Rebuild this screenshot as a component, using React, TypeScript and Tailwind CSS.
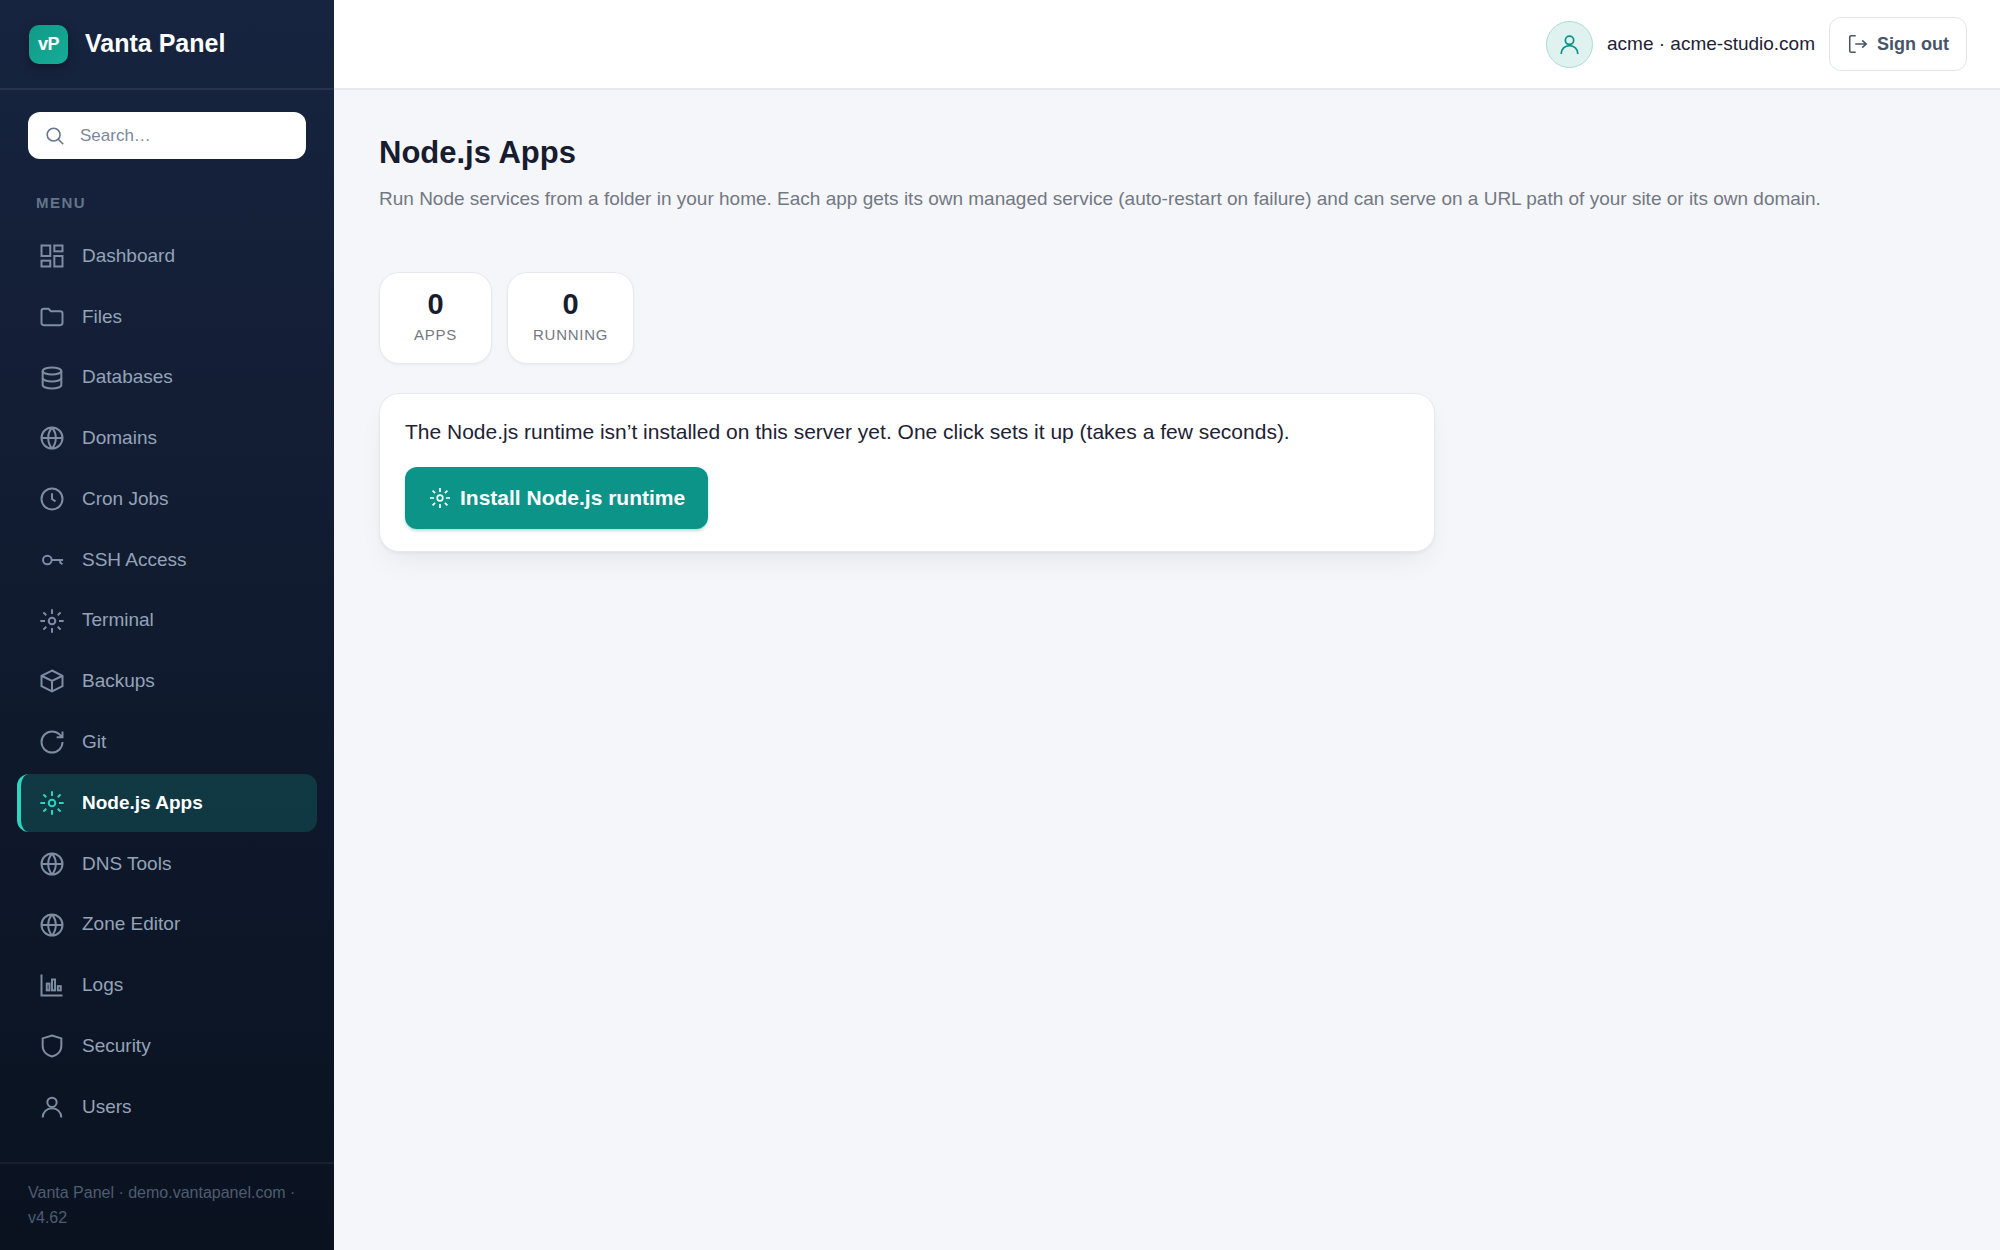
import React from 'react';

type IconName =
  | 'dashboard'
  | 'folder'
  | 'database'
  | 'globe'
  | 'clock'
  | 'key'
  | 'gear'
  | 'box'
  | 'refresh'
  | 'chart'
  | 'shield'
  | 'user'
  | 'search'
  | 'logout';

const ICONS: Record<IconName, React.ReactNode> = {
  dashboard: (
    <>
      <rect x="3" y="3" width="7.5" height="9" />
      <rect x="14" y="3" width="7" height="5" />
      <rect x="14" y="12" width="7" height="9" />
      <rect x="3" y="16" width="7.5" height="5" />
    </>
  ),
  folder: <path d="M3 7a2 2 0 0 1 2-2h4l2 2h8a2 2 0 0 1 2 2v8a2 2 0 0 1-2 2H5a2 2 0 0 1-2-2z" />,
  database: (
    <>
      <ellipse cx="12" cy="6" rx="8" ry="3" />
      <path d="M4 6v12c0 1.7 3.6 3 8 3s8-1.3 8-3V6" />
      <path d="M4 12c0 1.7 3.6 3 8 3s8-1.3 8-3" />
    </>
  ),
  globe: (
    <>
      <circle cx="12" cy="12" r="9" />
      <path d="M3 12h18M12 3a14 14 0 0 1 0 18M12 3a14 14 0 0 0 0 18" />
    </>
  ),
  clock: (
    <>
      <circle cx="12" cy="12" r="9" />
      <path d="M12 7v5l3 2" />
    </>
  ),
  key: (
    <>
      <circle cx="8" cy="12" r="3.7" />
      <path d="M11.7 12h9.8M19 12v2.2l2 1.4" />
    </>
  ),
  gear: (
    <>
      <circle cx="12" cy="12" r="2.8" />
      <path d="M12 2v4M12 18v4M2 12h4M18 12h4M4.6 4.6l2.5 2.5M16.9 16.9l2.5 2.5M4.6 19.4l2.5-2.5M16.9 7.1l2.5-2.5" />
    </>
  ),
  box: <path d="M12 3l9 4.5v9L12 21l-9-4.5v-9zM3 7.5l9 4.5 9-4.5M12 12v9" />,
  refresh: <path d="M21 12a9 9 0 1 1-9-9c2.5 0 4.9 1 6.7 2.7L21 8M21 3v5h-5" />,
  chart: (
    <>
      <path d="M3 3v18h18" />
      <rect x="7.5" y="10.8" width="2.3" height="5.8" />
      <rect x="12" y="7.3" width="2.6" height="9.3" />
      <rect x="17" y="13" width="2.5" height="3.6" />
    </>
  ),
  shield: <path d="M12 3l8 2.5V12c0 5-4 8-8 9-4-1-8-4-8-9V5.5z" />,
  user: (
    <>
      <circle cx="12" cy="8" r="4" />
      <path d="M4 21a8 8 0 0 1 16 0" />
    </>
  ),
  search: (
    <>
      <circle cx="10.5" cy="10.5" r="7" />
      <path d="M21 21l-5.5-5.5" />
    </>
  ),
  logout: <path d="M9.5 3h-5A1.5 1.5 0 0 0 3 4.5v15A1.5 1.5 0 0 0 4.5 21h5M9 12h12M16.5 8l4.5 4-4.5 4" />,
};

const Icon: React.FC<{ name: IconName; className?: string }> = ({ name, className }) => (
  <svg viewBox="0 0 24 24" fill="none" stroke="currentColor" strokeWidth={1.7} className={className} aria-hidden="true">
    {ICONS[name]}
  </svg>
);

const MENU: { label: string; icon: IconName }[] = [
  { label: 'Dashboard', icon: 'dashboard' },
  { label: 'Files', icon: 'folder' },
  { label: 'Databases', icon: 'database' },
  { label: 'Domains', icon: 'globe' },
  { label: 'Cron Jobs', icon: 'clock' },
  { label: 'SSH Access', icon: 'key' },
  { label: 'Terminal', icon: 'gear' },
  { label: 'Backups', icon: 'box' },
  { label: 'Git', icon: 'refresh' },
  { label: 'Node.js Apps', icon: 'gear' },
  { label: 'DNS Tools', icon: 'globe' },
  { label: 'Zone Editor', icon: 'globe' },
  { label: 'Logs', icon: 'chart' },
  { label: 'Security', icon: 'shield' },
  { label: 'Users', icon: 'user' },
];

const ACTIVE = 'Node.js Apps';

const Sidebar: React.FC = () => (
  <aside className="w-[334px] shrink-0 flex flex-col bg-linear-to-b from-[#17243f] to-[#0a1220]">
    <div className="h-[90px] px-[29px] flex items-center gap-[17px] border-b-2 border-white/8">
      <div className="size-[39px] rounded-[10px] flex items-center justify-center bg-linear-to-br from-[#0f9a88] to-[#16ad98] text-white text-lg font-bold tracking-tight shadow-[0_3px_10px_rgba(0,0,0,0.35)]">
        vP
      </div>
      <span className="text-[25px] font-bold text-white">Vanta Panel</span>
    </div>

    <div className="px-7 pt-[22px]">
      <label className="h-[47px] px-4 flex items-center gap-[14px] rounded-xl bg-white text-[#64748b]">
        <Icon name="search" className="size-[22px] shrink-0" />
        <input
          type="text"
          placeholder="Search…"
          aria-label="Search"
          className="w-full bg-transparent outline-none text-[17px] placeholder:text-[#7b879c]"
        />
      </label>
    </div>

    <div className="mt-[34px] mb-[14px] px-9 text-[15px] leading-5 font-bold tracking-widest text-[#64748b]">MENU</div>

    <nav className="flex-1 px-[17px] pb-[26px] flex flex-col justify-between">
      {MENU.map((item) => {
        const active = item.label === ACTIVE;
        return (
          <a
            key={item.label}
            href="#"
            aria-current={active ? 'page' : undefined}
            className={`h-[58px] pl-[17px] flex items-center gap-4 rounded-xl border-l-4 text-[19px] ${
              active
                ? 'border-[#2dd4bf] bg-[#14b8a6]/20 text-white font-bold'
                : 'border-transparent text-[#94a3b8]'
            }`}
          >
            <Icon name={item.icon} className={`size-7 shrink-0 ${active ? 'text-[#2dd4bf]' : 'text-[#7f8da3]'}`} />
            {item.label}
          </a>
        );
      })}
    </nav>

    <div className="px-7 pt-4 pb-5 border-t-2 border-white/6 text-base leading-[25px] text-[#4f5c70]">
      Vanta Panel · demo.vantapanel.com · v4.62
    </div>
  </aside>
);

const TopBar: React.FC = () => (
  <header className="h-[90px] px-[33px] flex items-center justify-end gap-[14px] bg-white border-b-2 border-[#e6eaef]">
    <div className="flex items-center gap-[14px]">
      <span className="size-[47px] rounded-full flex items-center justify-center bg-[#e0f2f0] border border-[#a9dcd4] text-[#0d9488]">
        <Icon name="user" className="size-[25px]" />
      </span>
      <span className="text-[19px] text-[#1e2233]">acme · acme-studio.com</span>
    </div>
    <button
      type="button"
      className="h-[54px] px-[17px] flex items-center gap-2 rounded-xl bg-white border border-[#e2e6ec] text-lg font-bold text-[#475569]"
    >
      <Icon name="logout" className="size-[22px]" />
      Sign out
    </button>
  </header>
);

const Stat: React.FC<{ value: number; label: string }> = ({ value, label }) => (
  <div className="min-w-[113px] px-[25px] pt-4 pb-[17px] text-center rounded-[20px] bg-white border border-[#e6e9ef] shadow-[0_1px_3px_rgba(15,23,42,0.05)]">
    <div className="text-[29px] leading-[30px] font-bold text-[#171c2e]">{value}</div>
    <div className="mt-[5px] text-[15px] leading-[22px] tracking-wider text-[#737882]">{label}</div>
  </div>
);

const App: React.FC = () => {
  return (
    <div className="min-h-screen flex bg-[#f4f6fa] font-['Liberation_Sans',Arial,sans-serif] text-[#1e2233]">
      <Sidebar />
      <div className="flex-1 min-w-0">
        <TopBar />
        <main className="px-[45px] pt-11">
          <h1 className="text-[31px] leading-[37px] font-bold text-[#171c2e]">Node.js Apps</h1>
          <p className="mt-[13px] text-[19px] leading-[30px] text-[#737882]">
            Run Node services from a folder in your home. Each app gets its own managed service (auto-restart on failure)
            and can serve on a URL path of your site or its own domain.
          </p>

          <div className="mt-[58px] flex gap-[15px]">
            <Stat value={0} label="APPS" />
            <Stat value={0} label="RUNNING" />
          </div>

          <section className="mt-[29px] max-w-[1056px] px-[25px] py-[22px] rounded-[20px] bg-white border border-[#e6e9ef] shadow-[0_2px_3px_rgba(15,23,42,0.04),0_14px_28px_-6px_rgba(15,23,42,0.06)]">
            <p className="text-[21px] leading-8">
              The Node.js runtime isn’t installed on this server yet. One click sets it up (takes a few seconds).
            </p>
            <button
              type="button"
              className="mt-[19px] h-[62px] px-[23px] flex items-center gap-2 rounded-xl bg-[#0d9488] text-white text-[21px] font-bold shadow-[0_2px_3px_rgba(13,148,136,0.3)]"
            >
              <Icon name="gear" className="size-6" />
              Install Node.js runtime
            </button>
          </section>
        </main>
      </div>
    </div>
  );
};

export default App;
